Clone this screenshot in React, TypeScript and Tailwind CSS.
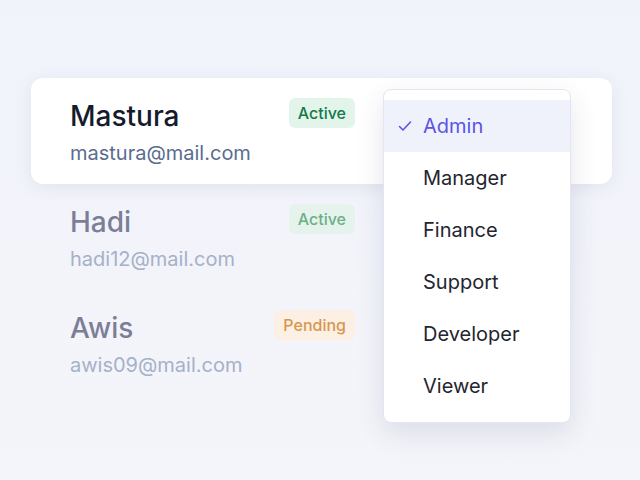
import React from 'react';

const users = [
  { name: 'Mastura', email: 'mastura@mail.com', status: 'Active' },
  { name: 'Hadi', email: 'hadi12@mail.com', status: 'Active' },
  { name: 'Awis', email: 'awis09@mail.com', status: 'Pending' },
];

const roles = ['Admin', 'Manager', 'Finance', 'Support', 'Developer', 'Viewer'];

const Badge = ({ status, faded }: { status: string; faded: boolean }) => {
  const pending = status === 'Pending';
  const cls = pending
    ? 'bg-[#fcefe3] text-[#d9964f]'
    : faded
      ? 'bg-[#e6f3ec] text-[#6bb08a]'
      : 'bg-[#e3f5ea] text-[#15794a]';
  return (
    <span className={`mt-[20px] h-[30px] px-[9px] rounded-[6px] flex items-center text-[16px] font-medium ${cls}`}>
      {status}
    </span>
  );
};

export default function App() {
  return (
    <div
      className="relative w-[640px] h-[480px] overflow-hidden bg-gradient-to-b from-[#f1f3fb] to-[#f4f5fa] pt-[78px] pl-[31px] pr-[28px]"
      style={{ fontFamily: 'Inter, "Noto Sans", sans-serif' }}
    >
      {users.map((u, i) => {
        const active = i === 0;
        return (
          <div
            key={u.name}
            className={`h-[106px] pl-[39px] pr-[257px] flex justify-between items-start ${
              active ? 'bg-white rounded-[12px] shadow-[0_4px_18px_rgba(40,50,90,0.08)]' : ''
            }`}
          >
            <div className="pt-[20px] flex flex-col">
              <span className={`text-[28px] leading-[36px] font-medium ${active ? 'text-[#161a2e]' : 'text-[#7c7e98]'}`}>
                {u.name}
              </span>
              <span className={`text-[20px] leading-[38px] ${active ? 'text-[#5a6d8f]' : 'text-[#a5b1c8]'}`}>
                {u.email}
              </span>
            </div>
            <Badge status={u.status} faded={!active} />
          </div>
        );
      })}

      {/* role dropdown */}
      <div className="absolute left-[383px] top-[89px] w-[188px] py-[10px] bg-white rounded-[8px] border border-[#e3e6f2] shadow-[0_10px_28px_rgba(40,50,90,0.12)]">
        {roles.map((r, i) => (
          <div
            key={r}
            className={`h-[52px] flex items-center text-[20px] ${
              i === 0 ? 'bg-[#eff2fb] text-[#5b54e6]' : 'text-[#23252f]'
            }`}
          >
            <span className="w-[39px] flex justify-end pr-[10px]">
              {i === 0 && (
                <svg width="16" height="16" viewBox="0 0 16 16" fill="none">
                  <path d="M2.5 8.5 L6 12 L13.5 4" stroke="#5b54e6" strokeWidth="1.6" strokeLinecap="round" strokeLinejoin="round" />
                </svg>
              )}
            </span>
            {r}
          </div>
        ))}
      </div>
    </div>
  );
}
